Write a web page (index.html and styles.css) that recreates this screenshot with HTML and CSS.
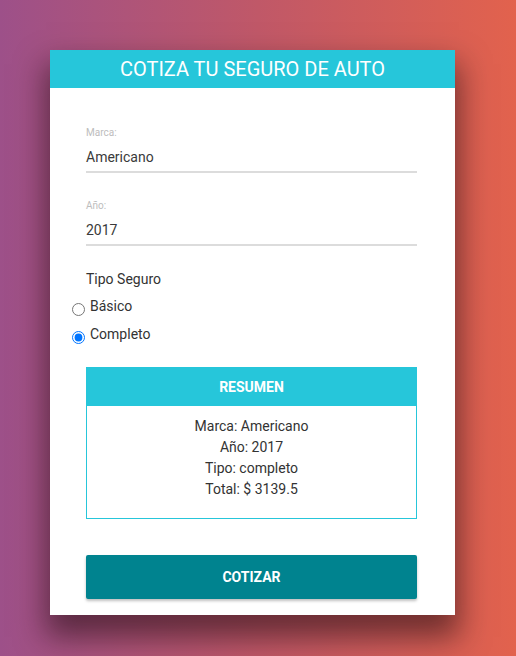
FILE: index.html
```html
<!DOCTYPE html>
<html lang="es">
<head>
<meta charset="utf-8">
<title>Cotiza tu seguro de auto</title>
<link rel="stylesheet" href="styles.css">
</head>
<body>
<div class="page">
  <div class="card">
    <header class="card-header">COTIZA TU SEGURO DE AUTO</header>
    <form class="form">
      <div class="field">
        <label class="field-label">Marca:</label>
        <div class="field-input">Americano</div>
      </div>
      <div class="field field-second">
        <label class="field-label">Año:</label>
        <div class="field-input">2017</div>
      </div>
      <div class="tipo">
        <div class="tipo-title">Tipo Seguro</div>
        <label class="radio-row"><input type="radio" name="tipo" class="radio"><span>Básico</span></label>
        <label class="radio-row"><input type="radio" name="tipo" class="radio" checked><span>Completo</span></label>
      </div>
      <div class="resumen">
        <div class="resumen-header">RESUMEN</div>
        <div class="resumen-body">
          <p>Marca: Americano</p>
          <p>Año: 2017</p>
          <p>Tipo: completo</p>
          <p>Total: $ 3139.5</p>
        </div>
      </div>
      <button type="button" class="btn">COTIZAR</button>
    </form>
  </div>
</div>
</body>
</html>
```

FILE: styles.css
```css
html, body {
  margin: 0;
  padding: 0;
}
body {
  font-family: Roboto, "Liberation Sans", sans-serif;
  background: linear-gradient(to right, #9d5089 0%, #c05868 50%, #e2624d 100%);
  min-height: 656px;
  overflow: hidden;
}
.page {
  padding: 50px 0 0 50px;
}
.card {
  width: 405px;
  background: #fff;
  box-shadow: 0 18px 28px 4px rgba(30, 10, 15, 0.55);
}
.card-header {
  background: #26c6da;
  color: #fff;
  height: 38px;
  line-height: 38px;
  text-align: center;
  font-size: 20px;
}
.form {
  padding: 38px 38px 16px 36px;
}
.field {
  display: flex;
  flex-direction: column;
}
.field-second {
  margin-top: 26px;
}
.field-label {
  font-size: 10px;
  line-height: 14px;
  color: #bdbdbd;
}
.field-input {
  font-size: 14px;
  padding: 3px 0 0;
  line-height: 28px;
  color: #3a3a3a;
  border-bottom: 2px solid #dcdcdc;
}
.tipo {
  margin-top: 23px;
  display: flex;
  flex-direction: column;
}
.tipo-title {
  font-size: 14px;
  line-height: 20px;
  color: #333;
}
.radio-row {
  display: flex;
  align-items: center;
  margin-left: -14px;
  height: 28px;
  font-size: 14px;
  color: #333;
}
.radio-row:first-of-type {
  margin-top: 3px;
}
.radio {
  width: 13px;
  height: 13px;
  margin: 6px 5px 0 0;
}
.resumen {
  margin-top: 19px;
  border: 1px solid #26c6da;
}
.resumen-header {
  background: #26c6da;
  color: #fff;
  height: 38px;
  line-height: 38px;
  text-align: center;
  font-size: 14px;
  font-weight: 700;
}
.resumen-body {
  padding: 10px 0 18px;
  text-align: center;
  font-size: 14px;
  line-height: 21px;
  color: #333;
}
.resumen-body p {
  margin: 0;
}
.btn {
  display: block;
  width: 100%;
  margin-top: 36px;
  height: 44px;
  border: none;
  border-radius: 2px;
  background: #00838f;
  color: #fff;
  font-family: Roboto, "Liberation Sans", sans-serif;
  font-size: 14px;
  font-weight: 700;
  box-shadow: 0 2px 3px rgba(0, 0, 0, 0.25);
}
```
